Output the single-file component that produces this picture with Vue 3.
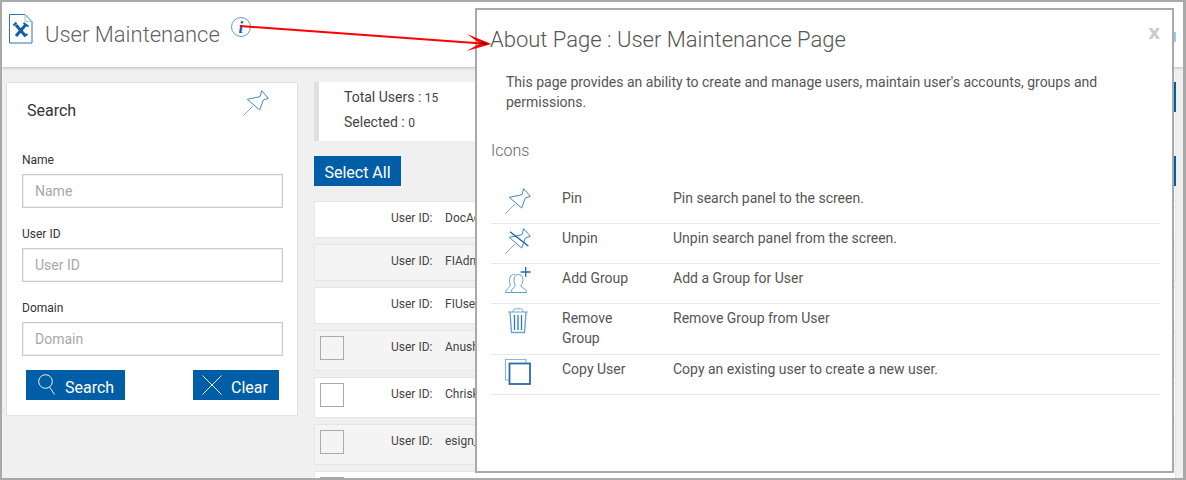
<script setup>
const rows = [
  { id: 'DocAdmin', check: false, text: true },
  { id: 'FIAdmin', check: false, text: true },
  { id: 'FIUser', check: false, text: true },
  { id: 'Anushka', check: true, text: true },
  { id: 'Chrisk', check: true, text: true },
  { id: 'esign_admin', check: true, text: true },
  { id: 'last', check: true, text: false }
]
const fields = ['Name', 'User ID', 'Domain']
</script>

<template>
  <div class="frame">
    <header class="top">
      <svg class="file" width="24" height="30" viewBox="0 0 24 30">
        <path d="M.5.5H16L23 7.500V29H.5Z" fill="#fff" stroke="#2f74ad" />
        <path d="M16 .5V7.500H23" fill="none" stroke="#9cc3e2" />
        <path d="M7 11L16.500 22M17 10.500L7 22" stroke="#0f5fa8" stroke-width="3" fill="none" />
        <path d="M4.500 11.500L7.500 8.500M14.500 9L19.500 12.500M15 22.500L18.500 20" stroke="#0f5fa8" stroke-width="2" fill="none" />
      </svg>
      <h1 class="page-title">User Maintenance</h1>
      <span class="info"><i>i</i></span>
      <span class="head-btn"></span>
    </header>

    <div class="content">
      <aside class="panel">
        <div class="panel-head">
          <h2>Search</h2>
          <svg width="26" height="26" viewBox="0 0 26 26" class="ico">
            <path d="M.3 25.700L10 16" stroke="#7fb0da" />
            <path d="M4.300 9.300L17 6.700L18.700 .7L25.300 8.300L20.300 10L16.700 20Z" />
          </svg>
        </div>
        <div class="fields">
          <label v-for="f in fields" :key="f" class="field">
            <span>{{ f }}</span>
            <input type="text" :placeholder="f" />
          </label>
        </div>
        <div class="actions">
          <button class="btn search-btn">
            <svg width="18" height="22" viewBox="0 0 18 22" class="btn-ico">
              <circle cx="7.500" cy="7.500" r="6.800" />
              <path d="M11.500 13L16.500 20.500" />
            </svg>
            Search
          </button>
          <button class="btn clear-btn">
            <svg width="20" height="20" viewBox="0 0 20 20" class="btn-ico">
              <path d="M.5 .5L19.500 19.500M19.500 .5L.5 19.500" />
            </svg>
            Clear
          </button>
        </div>
      </aside>

      <main class="list">
        <div class="stats-row">
          <div class="stats">
            <div>Total Users : <small>15</small></div>
            <div>Selected : <small>0</small></div>
          </div>
          <span class="block"></span>
        </div>
        <div class="select-row">
          <button class="select-all">Select All</button>
          <span class="block"></span>
        </div>
        <div class="rows">
          <div v-for="r in rows" :key="r.id" class="row">
            <div class="check-col"><span v-if="r.check" class="check"></span></div>
            <template v-if="r.text">
              <span class="uid">User ID:</span>
              <span class="val">{{ r.id }}</span>
            </template>
          </div>
        </div>
      </main>
    </div>

    <section class="modal">
      <div class="modal-head">
        <h2>About Page : User Maintenance Page</h2>
        <span class="close">x</span>
      </div>
      <p class="desc">This page provides an ability to create and manage users, maintain user's accounts, groups and permissions.</p>
      <h3>Icons</h3>
      <div class="legend">
        <div class="legend-row">
          <div class="l-icon">
            <svg width="26" height="26" viewBox="0 0 26 26" class="ico">
              <path d="M.3 25.700L10 16" stroke="#7fb0da" />
              <path d="M4.300 9.300L17 6.700L18.700 .7L25.300 8.300L20.300 10L16.700 20Z" />
            </svg>
          </div>
          <div class="l-name">Pin</div>
          <div class="l-desc">Pin search panel to the screen.</div>
        </div>
        <div class="legend-row">
          <div class="l-icon">
            <svg width="26" height="26" viewBox="0 0 26 26" class="ico">
              <path d="M.3 25.700L10 16" stroke="#7fb0da" />
              <path d="M4.300 9.300L17 6.700L18.700 .7L25.300 8.300L20.300 10L16.700 20Z" />
              <path d="M5 3.700L23.300 18" stroke="#125f9f" stroke-width="1.300" />
            </svg>
          </div>
          <div class="l-name">Unpin</div>
          <div class="l-desc">Unpin search panel from the screen.</div>
        </div>
        <div class="legend-row">
          <div class="l-icon">
            <svg width="27" height="27" viewBox="0 0 27 27" class="ico people">
              <path d="M7 25.500H21.500C22 22.500 18.500 21.500 16.500 20C15.500 19 16 18 17 16.500C19 13.500 18 7.500 13.500 7.500C9.500 7.500 8 12.500 9.500 16.500C10.300 18.500 10.500 19.500 9 20.500C7 21.500 6 23.500 7 25.500Z" />
              <path d="M10 7.500C7 7 4 9.500 4.500 14.500C4.800 16.500 5.500 17.500 5 19C4.500 20.500 1 22 .5 25.500H7" />
              <path d="M20.700 0V10M15.700 5H25.700" stroke="#1f6eb0" stroke-width="1.300" />
            </svg>
          </div>
          <div class="l-name">Add Group</div>
          <div class="l-desc">Add a Group for User</div>
        </div>
        <div class="legend-row">
          <div class="l-icon">
            <svg width="26" height="26" viewBox="0 0 26 26" class="ico trash">
              <path d="M3 4H23" />
              <path d="M8 4C8 1 9 .7 13 .7C17 .7 18 1 18 4" />
              <path d="M5 4L6.500 24.500H19.500L21 4" stroke-width="1.400" />
              <path d="M9.500 7V22M13 7V22M16.500 7V22" stroke="#2f7ab8" stroke-width="1.300" />
            </svg>
          </div>
          <div class="l-name">Remove Group</div>
          <div class="l-desc">Remove Group from User</div>
        </div>
        <div class="legend-row">
          <div class="l-icon">
            <svg width="26" height="26" viewBox="0 0 26 26" class="ico copy">
              <path d="M21 4V.5H.5V21H4" stroke="#8ab6dc" stroke-width="1.200" />
              <rect x="4.500" y="4.500" width="20.500" height="20.500" stroke="#2a6ca8" stroke-width="1.800" />
            </svg>
          </div>
          <div class="l-name">Copy User</div>
          <div class="l-desc">Copy an existing user to create a new user.</div>
        </div>
      </div>
    </section>

    <svg class="arrow" width="1186" height="480" viewBox="0 0 1186 480">
      <path d="M240 26L482 43.500" stroke="#f00" stroke-width="2" />
      <path d="M491.500 44L467 34L480 43.500L466.500 51Z" fill="#f00" />
      <path d="M481 43L487 44" stroke="#400" stroke-width="1.500" />
    </svg>
  </div>
</template>

<style>
html, body { margin: 0; padding: 0; }
</style>

<style scoped>
.frame {
  position: relative;
  box-sizing: border-box;
  width: 1186px;
  height: 480px;
  overflow: hidden;
  border: 2px solid #a9a9a9;
  border-right-width: 3px;
  background: #f0f0f0;
  font-family: Roboto, "Liberation Sans", sans-serif;
  color: #444;
}
.top {
  display: flex;
  align-items: flex-start;
  box-sizing: border-box;
  height: 65px;
  padding: 12px 7px 0 7px;
  background: #fff;
  box-shadow: 0 1px 3px rgba(0, 0, 0, .22);
  position: relative;
}
.file { flex: none; }
.page-title {
  margin: 3px 0 0 12px;
  font-size: 22px;
  line-height: 36px;
  font-weight: 300;
  color: #5f6368;
}
.info {
  flex: none;
  box-sizing: border-box;
  width: 20px;
  height: 20px;
  margin: 3px 0 0 11px;
  border: 1.3px solid #5c9bd1;
  border-radius: 50%;
  display: flex;
  align-items: center;
  justify-content: center;
  font: italic bold 17px/1 "Liberation Serif", serif;
  color: #0f5fa8;
}
.head-btn {
  margin: 18px 0 0 auto;
  width: 40px;
  height: 10px;
  background: #9cc8ec;
}
.content {
  display: flex;
  gap: 16px;
  padding: 15px 0 0 4px;
}
.panel {
  flex: none;
  box-sizing: border-box;
  width: 292px;
  height: 334px;
  padding: 0 15px;
  background: #fff;
  border: 1px solid #e2e2e2;
}
.panel-head {
  display: flex;
  justify-content: space-between;
  align-items: flex-start;
  height: 69px;
  padding: 7px 13px 0 5px;
  box-sizing: border-box;
}
.panel-head h2 {
  margin: 9px 0 0;
  font-size: 16px;
  line-height: 24px;
  font-weight: 400;
  color: #333;
}
.ico { flex: none; fill: none; stroke: #3f86c4; stroke-width: 1; overflow: visible; display: block; }
.people { margin-top: -1px; stroke: #5f9fd4; }
.trash { stroke: #6aa5d6; }
.fields { display: flex; flex-direction: column; gap: 18px; }
.field { display: flex; flex-direction: column; gap: 6px; }
.field span { font-size: 12px; line-height: 16px; color: #333; }
.field input {
  box-sizing: border-box;
  width: 261px;
  height: 34px;
  padding: 0 12px;
  border: 1px solid #ccc;
  box-shadow: inset 0 0 0 1px #eee;
  outline: 0;
  border-radius: 0;
  font: 14px Roboto, sans-serif;
  background: #fff;
}
.field input::placeholder { color: #a8a8a8; opacity: 1; }
.actions { display: flex; margin-top: 14px; padding-left: 4px; }
.btn, .select-all {
  border: 0;
  border-radius: 0;
  background: #005ea6;
  color: #fff;
  font: 16px Roboto, sans-serif;
  padding: 0;
}
.btn {
  display: flex;
  align-items: center;
  height: 30px;
  box-sizing: border-box;
  padding-top: 4px;
}
.search-btn { width: 99px; padding-left: 12px; gap: 9px; }
.clear-btn { width: 86px; margin-left: 68px; padding-left: 9px; gap: 9px; }
.btn-ico { fill: none; stroke: #e8f2fa; stroke-width: 1; flex: none; margin-top: -4px; }
.list { flex: none; width: 862px; }
.stats-row, .select-row { display: flex; justify-content: space-between; align-items: flex-start; }
.stats {
  box-sizing: border-box;
  width: 600px;
  height: 59px;
  padding: 3px 0 0 25px;
  background: #fff;
  border-left: 5px solid #e0e0e0;
  font-size: 14px;
  line-height: 25px;
  color: #444;
}
.stats div + div { margin-top: -1px; }
.stats small { font-size: 12px; }
.block { width: 60px; height: 30px; background: #005ea6; }
.select-row { margin-top: 15px; margin-bottom: 15px; }
.select-all { width: 87px; height: 30px; padding-top: 2px; }
.rows { display: flex; flex-direction: column; gap: 6px; }
.row {
  display: flex;
  align-items: flex-start;
  padding: 5px 5px 9px;
  border: 1px solid #e6e6e6;
  background: #fff;
  font-size: 12px;
  flex: none;
}
.row:nth-child(even) { background: #f4f4f4; }
.check-col { width: 71px; flex: none; }
.check {
  display: block;
  box-sizing: border-box;
  width: 24px;
  height: 24px;
  margin-bottom: 1px;
  border: 1px solid #aaa;
}
.uid { width: 54px; flex: none; line-height: 20px; margin-top: 1px; }
.val { line-height: 20px; margin-top: 1px; }
.modal {
  position: absolute;
  left: 473px;
  top: 6px;
  box-sizing: border-box;
  width: 699px;
  height: 465px;
  padding: 15px 12px 0 14px;
  background: #fff;
  border: 2px solid #a9a9a9;
  color: #555;
}
.modal-head { display: flex; justify-content: space-between; align-items: flex-start; height: 30px; }
.modal-head h2 {
  margin: 0 0 0 -1px;
  font-size: 22px;
  line-height: 30px;
  font-weight: 300;
  color: #555;
}
.close {
  font: bold 20px/20px "Open Sans", sans-serif;
  color: #ccc;
  margin-top: -3px;
}
.desc {
  margin: 17px 0 0 15px;
  width: 600px;
  font-size: 14px;
  line-height: 20px;
  color: #555;
}
h3 {
  margin: 29px 0 0;
  font-size: 16px;
  line-height: 20px;
  font-weight: 300;
  color: #666;
}
.legend { margin-top: 23px; width: 669px; }
.legend-row {
  display: flex;
  align-items: flex-start;
  box-sizing: border-box;
  min-height: 40px;
  padding: 4px 0 6px;
  border-bottom: 1px solid #e8e8e8;
  font-size: 14px;
  line-height: 20px;
}
.l-icon { flex: none; width: 57px; margin-left: 14px; }
.l-name { flex: none; width: 81px; margin-right: 30px; }
.arrow { position: absolute; left: -2px; top: -2px; pointer-events: none; }
</style>
